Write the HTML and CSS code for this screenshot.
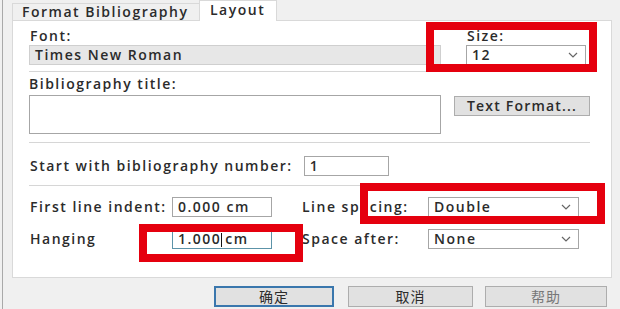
FILE: index.html
```html
<!DOCTYPE html>
<html lang="en">
<head>
    <meta charset="UTF-8">
    <title>Layout</title>
    <link rel="stylesheet" href="styles.css">
</head>
<body>
    <div class="window">
        <div class="tabs">
            <div class="tab">Format Bibliography</div>
            <div class="tab active">Layout</div>
        </div>

        <div class="panel">
            <div class="row-top">
                <div class="font-field">
                    <div class="label">Font:</div>
                    <div class="box disabled">Times New Roman</div>
                </div>
                <div class="size-field">
                    <div class="label">Size:</div>
                    <div class="box combo">
                        <span>12</span>
                        <svg class="chev" width="10" height="6" viewBox="0 0 10 6"><polyline points="1,1 5,5 9,1" fill="none" stroke="#666" stroke-width="1.2"/></svg>
                    </div>
                </div>
            </div>

            <div class="divider"></div>

            <div class="label">Bibliography title:</div>
            <div class="row-title">
                <div class="box textarea"></div>
                <div class="btn small">Text Format...</div>
            </div>

            <div class="divider lower"></div>

            <div class="row-start">
                <div class="label">Start with bibliography number:</div>
                <div class="box number">1</div>
            </div>

            <div class="divider lower"></div>

            <div class="grid">
                <div class="label">First line indent:</div>
                <div class="box measure">0.000 cm</div>
                <div class="label">Line spacing:</div>
                <div class="box combo">
                    <span>Double</span>
                    <svg class="chev" width="10" height="6" viewBox="0 0 10 6"><polyline points="1,1 5,5 9,1" fill="none" stroke="#666" stroke-width="1.2"/></svg>
                </div>

                <div class="label">Hanging</div>
                <div class="box measure focused">1.000<span class="caret"></span>cm</div>
                <div class="label">Space after:</div>
                <div class="box combo">
                    <span>None</span>
                    <svg class="chev" width="10" height="6" viewBox="0 0 10 6"><polyline points="1,1 5,5 9,1" fill="none" stroke="#666" stroke-width="1.2"/></svg>
                </div>
            </div>

            <!-- red highlight frames drawn over the dialog -->
            <div class="mark mark-size"></div>
            <div class="mark mark-spacing"></div>
            <div class="mark mark-hanging"></div>
        </div>

        <div class="buttons">
            <div class="btn default ok">确定</div>
            <div class="btn cancel">取消</div>
            <div class="btn help">帮助</div>
        </div>
    </div>
</body>
</html>
```

FILE: styles.css
```css
body {
    margin: 0;
    padding: 0;
    background-color: #f0f0f0;
    font-family: "Open Sans", "Noto Sans CJK SC", sans-serif;
    font-weight: 600;
    font-size: 14px;
    letter-spacing: 1.5px;
    color: #2b2b2b;
}

.window {
    margin-left: 2px;
    width: 605px;
    height: 309px;
    padding: 0 4px 0 9px;
    border-left: 1px solid #a9a9a9;
    border-right: 1px solid #c4c4c4;
}

.tabs {
    display: flex;
    align-items: flex-end;
    height: 20px;
}

.tab {
    height: 16px;
    line-height: 16px;
    padding: 0 4px 0 9px;
    width: 173px;
    white-space: nowrap;
    overflow: hidden;
    border: 1px solid #d9d9d9;
    border-bottom: none;
    background-color: #f0f0f0;
}

.tab.active {
    position: relative;
    z-index: 1;
    width: 62px;
    height: 20px;
    line-height: 17px;
    margin-left: -1px;
    margin-bottom: -1px;
    padding: 0 4px 0 10px;
    background-color: white;
}

.panel {
    position: relative;
    width: 582px;
    height: 229px;
    padding: 7px 0 20px 16px;
    background-color: white;
    border: 1px solid #d9d9d9;
}

.label {
    height: 16px;
    line-height: 16px;
    white-space: nowrap;
}

.box {
    box-sizing: border-box;
    height: 20px;
    line-height: 18px;
    padding: 0 5px;
    border: 1px solid #a6a6a6;
    background-color: white;
    white-space: nowrap;
}

.row-top {
    display: flex;
}

.row-top .label {
    margin-bottom: 1px;
    padding-left: 1px;
}

.font-field {
    width: 412px;
}

.box.disabled {
    background-color: #e7e7e7;
    border-color: #cfcfcf;
}

.size-field {
    width: 120px;
    margin-left: 25px;
}

.combo {
    display: flex;
    justify-content: space-between;
    align-items: center;
    padding-right: 7px;
}

.chev {
    display: block;
}

.divider {
    width: 561px;
    height: 1px;
    margin: 6px 0 4px;
    background-color: #d6d6d6;
}

.divider.lower {
    margin: 8px 0 0;
}

.row-title {
    display: flex;
    align-items: flex-start;
    margin-top: 3px;
}

.textarea {
    width: 412px;
    height: 39px;
}

.btn {
    box-sizing: border-box;
    height: 21px;
    line-height: 19px;
    text-align: center;
    white-space: nowrap;
    background-color: #e1e1e1;
    border: 1px solid #adadad;
}

.btn.small {
    width: 136px;
    height: 20px;
    line-height: 18px;
    margin: 1px 0 0 13px;
    letter-spacing: 1.2px;
}

.row-start {
    display: flex;
    align-items: center;
    margin: 13px 0 9px 1px;
}

.number {
    width: 85px;
    margin-left: 11px;
}

.grid {
    display: grid;
    grid-template-columns: 142px 130px 126px 151px;
    row-gap: 12px;
    align-items: center;
    margin-top: 11px;
    padding-left: 1px;
}

.measure {
    width: 100px;
    padding-left: 5px;
}

.focused {
    border-color: #5c93a8;
}

.caret {
    display: inline-block;
    width: 1px;
    height: 14px;
    margin: 0 3px -3px 0;
    background-color: #111;
}

.mark {
    position: absolute;
    border: 8px solid #e5000e;
}

.mark-size {
    left: 413px;
    top: 1px;
    width: 155px;
    height: 34px;
}

.mark-spacing {
    left: 347px;
    top: 162px;
    width: 229px;
    height: 25px;
}

.mark-hanging {
    left: 126px;
    top: 203px;
    width: 148px;
    height: 22px;
}

.buttons {
    display: flex;
    margin-top: 8px;
    padding-left: 202px;
    font-weight: 400;
    letter-spacing: 1px;
}

.btn.ok {
    width: 120px;
    border: 2px solid #3a77ad;
    line-height: 17px;
}

.btn.cancel {
    width: 125px;
    margin-left: 14px;
}

.btn.help {
    width: 122px;
    margin-left: 12px;
    color: #777;
}
```
